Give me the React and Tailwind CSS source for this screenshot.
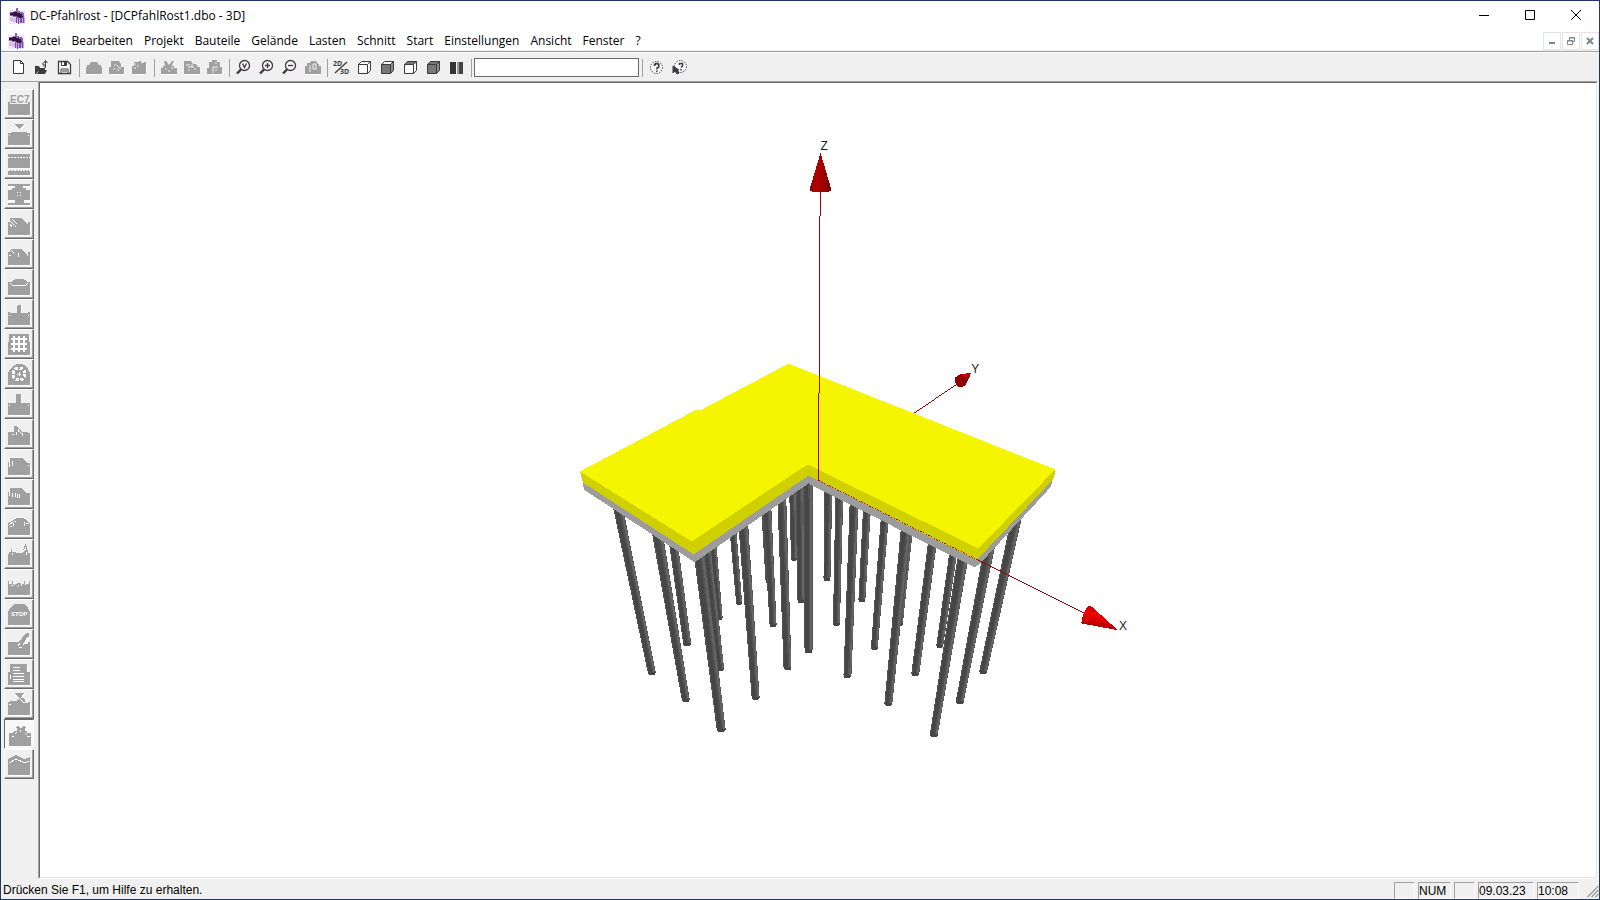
const menus = [
  "Datei",
  "Bearbeiten",
  "Projekt",
  "Bauteile",
  "Gelände",
  "Lasten",
  "Schnitt",
  "Start",
  "Einstellungen",
  "Ansicht",
  "Fenster",
  "?",
];

// [topX, topY, bottomX, bottomY, topWidth, bottomWidth], back to front
const piles = [
  [712, 540, 719.5, 619, 7, 5],
  [706, 545, 720, 670, 8, 7],
  [792, 485, 793.5, 560, 7, 6],
  [671, 530, 686.5, 645, 9, 8],
  [732, 525, 738.5, 604, 7, 6],
  [764, 500, 768, 582, 8, 6],
  [799, 480, 800.5, 602, 8, 7],
  [828, 482, 826.5, 580, 8, 7],
  [867, 500, 861.5, 601, 8, 7],
  [910, 520, 900, 625, 7, 5],
  [954, 545, 939.5, 647, 8, 7],
  [766, 500, 772.5, 626, 9, 7],
  [839, 487, 836, 625, 8, 7],
  [885, 510, 874, 649, 8, 7],
  [933, 535, 915, 675, 9, 8],
  [1020, 500, 983, 673, 11, 8],
  [615, 496, 651, 674, 10, 8],
  [655, 523, 685, 701, 11, 8],
  [698, 550, 720.5, 731, 11, 9],
  [742, 515, 755, 699, 10, 8],
  [781, 490, 787, 669, 9, 8],
  [807.5, 478, 808, 652, 9, 8],
  [854, 495, 847, 677, 9, 8],
  [906, 522, 888, 705, 10, 8],
  [991, 537, 959.5, 703, 11, 8],
  [963, 555, 933.5, 736, 11, 8],
];

const LINE = "#3c3c3c";

const doc = <path d="M3.5 1.5h7l3 3v10h-10zM10.5 1.5v3h3" fill="#fff" stroke={LINE} />;

const cube = (front, top) => (
  <>
    <path d="M2.5 5.5h9v9h-9z" fill={front} stroke={LINE} />
    <path d="M2.5 5.5l3-3h9l-3 3z" fill={top} stroke={LINE} />
    <path d="M11.5 14.5v-9l3-3v9z" fill={front === "#fff" ? "#fff" : "#8a8a8a"} stroke={LINE} />
  </>
);

const lens = (mark) => (
  <>
    <circle cx="9.5" cy="6.5" r="5" fill="#fbf5fd" stroke={LINE} strokeWidth="1.3" />
    <path d="M6 10.5l-4 4" stroke={LINE} strokeWidth="2.4" />
    <path d={mark} stroke={LINE} strokeWidth="1.4" fill="none" />
  </>
);

const grey = (d, marks) => (
  <>
    <path d={d} transform="translate(1 1)" fill="#fff" />
    <path d={d} fill="#a0a0a0" />
    {marks && <path d={marks} stroke="#f0f0f0" fill="none" />}
  </>
);

const toolGroups = [
  [
    ["Neu", doc],
    [
      "Öffnen",
      <>
        <path d="M2 7h4l1 2h5v2H6l-3 4H2zM4 15l2-4h8l-2 4z" fill={LINE} />
        <path d="M9 5h2v3M12.5 9V2M10.5 4l2-2.5 2 2.5" stroke={LINE} fill="none" />
      </>,
    ],
    [
      "Speichern",
      <>
        <path d="M2.5 2.5h9l3 3v9h-12z" fill="#fff" stroke={LINE} strokeWidth="1.3" />
        <path d="M5.5 2.5v4h5v-4M5 14v-4h7v4M6 12h5" fill="none" stroke={LINE} />
        <path d="M8 3h2v3H8z" fill={LINE} />
      </>,
    ],
  ],
  [
    ["Drucken", grey("M1 8h1V6h2l2-3h6l2 3h2v2h1v7H1z")],
    ["Seitenansicht", grey("M1 8h2V2h8l2 3v3h3v7H1z", "M6 7l2-2M9 6l2 3M5 10h2M9 10l2 2M12 8v2")],
    ["Bericht", grey("M1 7h2V3h5V2h2v1h5v12H1z", "M3 5h2M6 7h2M10 4l3-1M3 9h2")],
  ],
  [
    ["Ausschneiden", grey("M1 9h2V7h2L4 2h2l3 4 3-4h2l-2 5h2v2h3v6H1z", "M5 10h2M9 11v2M11 9h2")],
    ["Kopieren", grey("M1 2h7l2 3h3l2 3h2v7H1z", "M3 6h4M5 8h6M9 5v3M5 11h2M12 9v2")],
    ["Einfügen", grey("M1 9h2V3h3V1h5v2h3v5h2v7H1z", "M7 8h5M7 8v6M9 4h2M9 11h2")],
  ],
  [
    ["Zoom Vollbild", lens("M7.5 4.5l2 4 2-4")],
    ["Vergrößern", lens("M7 6.5h5M9.5 4v5")],
    ["Verkleinern", lens("M7 6.5h5")],
    ["Verschieben", grey("M1 7h2V4h3l1-2h5l2 3h1v2h2v8H1z", "M6 6v5M9 5h3v5H9zM5 12h2")],
  ],
  [
    [
      "2D/3D",
      <>
        <path d="M2 14L14 3" stroke={LINE} strokeWidth="1.3" />
        <text x="0" y="7" fontSize="7" fontWeight="bold" fill={LINE}>2D</text>
        <text x="7" y="15" fontSize="7" fontWeight="bold" fill={LINE}>3D</text>
      </>,
    ],
    ["Drahtmodell", cube("#fff", "#fff")],
    ["Vorderansicht", cube("#777", "#fff")],
    ["Draufsicht", cube("#fff", "#777")],
    ["Schattiert", cube("#777", "#777")],
    [
      "Teilung",
      <>
        <path d="M2 3h6v12H2z" fill="#333" />
        <path d="M9 3h2v12H9z" fill="#999" />
        <path d="M11 3h4v12h-4z" fill="#444" />
      </>,
    ],
  ],
];

const helpTools = [
  [
    "Hilfe",
    <>
      <circle cx="8.5" cy="8.5" r="6" fill="#fcf6fd" stroke={LINE} strokeDasharray="1.4 1.2" />
      <path d="M6.5 7V5.5h1v-1h2.5v1h.8V8L9 9v1.5M8.9 11.5v1.5" fill="none" stroke={LINE} strokeWidth="1.5" />
    </>,
  ],
  [
    "Direkthilfe",
    <>
      <circle cx="9.5" cy="7.5" r="6" fill="#fcf6fd" stroke={LINE} strokeDasharray="1.4 1.2" />
      <path d="M8.500 6V4.500h3V7L10 8.500M10 10v1.500" fill="none" stroke={LINE} strokeWidth="1.5" />
      <path d="M2 7v7l2-2 2 3 2-1-2-3h2z" fill={LINE} stroke={LINE} />
    </>,
  ],
];

// shape = filled silhouette, cut = engraved strokes
const sideTools = [
  { name: "EC7", shape: "M1 10h2v2h18v-2h2v13H1z", word: ["EC7", 3, 11, 10] },
  { name: "Gelände", shape: "M7 2h10l-5 5zM1 11h1v-1h20v1h1v12H1z", cut: "M2 10.5h2M20 10.5h2M2 13.5h1M21 13.5h1" },
  { name: "Schichten", shape: "M1 2h22v4H1zM1 6h22v10H1zM1 18h22v5H1z", cut: "M1 5.5h22M1 18.5h22", dots: true },
  { name: "Bodenprofil", shape: "M1 2h22v2H1zM1 8h4V6h3V3h8v3h3v2h4v10h-6v5H8v-5H1zM1 21h22v2H1z", cut: "M10 10.5h1M13 10.5h1M10 13.5h1M13 13.5h1M1 5.5h6M17 5.5h6M1 19.5h7M17 19.5h6" },
  { name: "Böschung", shape: "M1 10h2V6h11l6 6h1v-2h2v13H1z", cut: "M2 8l7 7M5 7l5 5M3 12l2 3" },
  { name: "Böschung 2", shape: "M1 10h2V7h12l5 6h1v-3h2v13H1z", cut: "M3 7l5 5M11.5 11v4M2 13.5h2M20 13.5h1" },
  { name: "Platte", shape: "M1 10h3l2-2 3-1h6l3 1 2 2h3v13H1z", cut: "M3 11l2 2h14l2-2" },
  { name: "Pfahl", shape: "M1 10h2v1h7V4l1-1h2l1 1v7h7v-1h2v13H1z", cut: "M2 13.5h1M21 13.5h1" },
  { name: "Pfahlraster", shape: "M1 10h1V2h20v8h1v13H1z", cut: "M4 7h16M4 12h16M4 17h16M7 4v16M12 4v16M17 4v16", wide: true },
  { name: "Pfahlkreis", shape: "M1 11l2-4 4-4 3-1h4l3 1 4 4 2 4v12H1z", wheel: true },
  { name: "Einzelpfahl", shape: "M1 11h8V2h5v9h9v12H1z", cut: "M2 13.5h1M21 13.5h1" },
  { name: "Schrägpfahl", shape: "M1 10h6V4h2l6 6h6v1h2v12H1z", cut: "M9.5 10v3M11.5 7v3M15.5 11v3M5 12h2M12 9l4 4" },
  { name: "Last links", shape: "M1 10h2V6h12l5 5h3v12H1z", cut: "M2.5 10v5M5.5 9v5M21 13.5h1" },
  { name: "Linienlast", shape: "M1 10h2V6h11l6 5h3v12H1z", cut: "M2.5 10v4M5.5 11v4M8.5 11v4M10.5 12v4M12.5 12v4" },
  { name: "Flächenlast", shape: "M1 11l4-2 2-2 3-1h5l3 1 2 2 3 2v12H1z", cut: "M2 13l4-3M6.5 11v3M17.5 10v4M7 9.5h2M19 12l3-1M3 14.5h2" },
  { name: "Umgebung", shape: "M1 12h1v-2h2V7h1v3h4v1h7V7h1V4h1V2h1v2h1v4h1v3h2v12H1z", cut: "M16 10l2-3M19 10v3M5.5 11v2M18 5v3" },
  { name: "Baugrund", shape: "M1 9h1v3h3V9h1v3h4v-1h4v1h3V9h1v3h4V9h1v14H1z", cut: "M4 13h2M7.5 10v3M10 15l2-2M14.5 11v3M18.5 10v3" },
  { name: "Stop", shape: "M1 10l2-4 4-4h10l4 4 2 4v13H1z", word: ["STOP", 4, 14, 6], light: true },
  { name: "Bearbeiten", shape: "M1 10h11l7-9h3v3l-5 8h4v-2h2v13H1z", cut: "M11 14l2-3M21 5l-5 8M12 15h3" },
  { name: "Liste", shape: "M1 10h2V2h17v8h3v13H1z", cut: "M6 5.5h7M6 8.5h7M6 11.5h11M6 14.5h11M6 17.5h11M6 19.5h11M3.5 13v4" },
  { name: "Schnitt", shape: "M7 1h10l-3 5h2l4 4h3v13H1V10h2v-1h7l2-3z", cut: "M12 6l5 5M17 10h4M2 12.5h2M18 8l3 2" },
  { name: "3D-Ansicht", shape: "M2 11h3l2-2h3V7L9 5l2-1 3 2 3-2 2 1-1 2v2h2v2h4v13H2z", cut: "M8 12l2-2M13.5 8v2M5 14h2M18 11l2 2M20 14h3", active: true },
  { name: "Ergebnisse", shape: "M1 7l8-4 8 4 6-2v18H1z", cut: "M2 11l7-4 9 4 4-2" },
];

function Tool({ name, children }) {
  return (
    <button aria-label={name} className="flex h-6 w-[23px] shrink-0 items-center justify-center">
      <svg viewBox="0 0 17 17" className="h-[17px] w-[17px]" fill="none">
        {children}
      </svg>
    </button>
  );
}

function Divider() {
  return (
    <span className="flex w-1.5 shrink-0 justify-center">
      <i className="h-[18px] w-px bg-[#a0a0a0]" />
    </span>
  );
}

function SideTool({ tool }) {
  return (
    <button
      aria-label={tool.name}
      className={`flex h-[30px] w-[30px] items-center justify-center border ${
        tool.active
          ? "border-t-[#696969] border-r-white border-b-white border-l-[#696969] bg-[#f8f8f8]"
          : "border-t-white border-r-[#696969] border-b-[#696969] border-l-white bg-[#f0f0f0] shadow-[inset_-1px_-1px_0_#a0a0a0]"
      }`}
    >
      <svg viewBox="0 0 24 24" className="h-6 w-6" shapeRendering="crispEdges">
        <path d={tool.shape} transform="translate(1 1)" fill="#fff" />
        <path d={tool.shape} fill="#a0a0a0" />
        {tool.cut && (
          <path
            d={tool.cut}
            fill="none"
            stroke="#fff"
            strokeWidth={tool.wide ? 2 : 1}
            strokeDasharray={tool.dots ? "2 1" : undefined}
          />
        )}
        {tool.wheel && (
          <g fill="none" stroke="#fff">
            <circle cx="12" cy="12" r="6" strokeWidth="3" strokeDasharray="3 1.7" />
            <path d="M12 10v4M10 12h4" />
          </g>
        )}
        {tool.word && (
          <text
            x={tool.word[1]}
            y={tool.word[2]}
            fontSize={tool.word[3]}
            fontWeight="bold"
            fontFamily="Liberation Sans, Arial, sans-serif"
            fill={tool.light ? "#fff" : "#a0a0a0"}
          >
            {tool.word[0]}
          </text>
        )}
      </svg>
    </button>
  );
}

function Logo() {
  return (
    <svg viewBox="0 0 16 16" className="h-4 w-4 shrink-0" shapeRendering="crispEdges">
      <path d="M0 2h16v14H0z" fill="#f0e6fa" />
      <path d="M1 9h3v4H1zM4 10h3v4H4z" fill="#d2bce8" />
      <path d="M7 9h9v6H7z" fill="#c4a4dc" />
      <path d="M7 9h1v6H7zM9 10h1v6H9zM11 10h2v5h-2zM14 8h1v7h-1z" fill="#7c4c9c" />
      <path d="M1 4h4V3h2V0h2v3l4 1 2 2v4l-3 1-5-2-6-1z" fill="#8c64b0" />
      <path d="M1 5l5-1 7 2 1 3-3 1-4-2-6-1z" fill="#321440" />
    </svg>
  );
}

function Pile({ p }) {
  const [x1, y1, x2, y2, w1, w2] = p;
  const strip = (a, b) =>
    `${x1 + (a - 0.5) * w1},${y1} ${x1 + (b - 0.5) * w1},${y1} ${x2 + (b - 0.5) * w2},${y2 - 2} ${x2 + (a - 0.5) * w2},${y2 - 2}`;
  return (
    <g>
      <ellipse cx={x2} cy={y2 - 2} rx={w2 / 2} ry="3" fill="#464646" />
      <polygon points={strip(0, 1)} fill="#525252" />
      <polygon points={strip(0.12, 0.55)} fill="#464646" />
      <polygon points={strip(0.72, 0.95)} fill="#646464" />
    </g>
  );
}

function Scene() {
  return (
    <svg viewBox="39 82 1557 795" className="h-full w-full" shapeRendering="crispEdges" role="img" aria-label="3D">
      <defs>
        <linearGradient id="coneZ">
          <stop offset="0" stopColor="#8c0000" />
          <stop offset="0.35" stopColor="#b40000" />
          <stop offset="1" stopColor="#780000" />
        </linearGradient>
        <linearGradient id="coneX" x1="0.6" y1="0" x2="0.3" y2="1">
          <stop offset="0" stopColor="#a00000" />
          <stop offset="0.35" stopColor="#f00000" />
          <stop offset="0.6" stopColor="#d80000" />
          <stop offset="1" stopColor="#900000" />
        </linearGradient>
      </defs>

      {piles.map((p) => (
        <Pile key={p.join()} p={p} />
      ))}

      {/* slab: concrete edge, yellow edge, top face */}
      <polygon points="582,480 583,489 694,562 808,483 974,567 980,563 1051,486 1052,478 976,556 808,473 693,552" fill="#9c9c9c" />
      <polygon points="579,470 582,482 693,554 808,475 976,560 1051,481 1054,477 1055,469 978,546 807,463 691,540" fill="#d0d000" />
      <polygon points="579,471 696,409 699,410 788,363 1055,469 978,548 807,464 691,541" fill="#f5f500" />

      <g stroke="#a00000" fill="none">
        <path d="M820.5 190v25M819.5 215v177M818.5 392v88" />
        <path d="M818 480l158 79" strokeDasharray="1.5 1.5" />
        <path d="M976 559l109 54M914 412.5l44-30" />
      </g>
      <path d="M820 152l11 37-3 2h-16l-3-2z" fill="url(#coneZ)" />
      <path d="M1090 605l28 25-37-7 2-9 4-7z" fill="url(#coneX)" />
      <path d="M971 372l-6 13-3 1h-4l-3-4v-5l4-3z" fill="#900000" />
      <path d="M971 372l-10 2 4 4z" fill="#c80000" />

      <g fontSize="12" fontFamily="Liberation Sans, Arial, sans-serif" fill="#1a1a1a">
        <text x="820" y="149">Z</text>
        <text x="971" y="372">Y</text>
        <text x="1119" y="630">X</text>
      </g>
    </svg>
  );
}

function Panel({ className, children }) {
  return (
    <span className={`h-[17px] border border-t-[#a0a0a0] border-r-white border-b-white border-l-[#a0a0a0] leading-4 ${className}`}>
      {children}
    </span>
  );
}

const mdiButton = "flex h-[18px] w-[18px] items-center justify-center border border-[#e3e3e3] bg-white";
const windowButton = "flex h-7 w-[46px] items-center justify-center self-start";

export default function App() {
  return (
    <div className="flex h-screen flex-col overflow-hidden border border-[#1f3864] bg-[#f0f0f0] font-['Open_Sans',sans-serif] text-xs text-black">
      <header className="flex h-[30px] shrink-0 items-center bg-white pl-2">
        <Logo />
        <h1 className="ml-[5px] flex-1 whitespace-nowrap">DC-Pfahlrost - [DCPfahlRost1.dbo - 3D]</h1>
        <button aria-label="Minimieren" className={windowButton}>
          <svg viewBox="0 0 10 10" className="h-2.5 w-2.5"><path d="M0 5.5h10" stroke="#000" /></svg>
        </button>
        <button aria-label="Maximieren" className={windowButton}>
          <svg viewBox="0 0 10 10" className="h-2.5 w-2.5"><path d="M.5.5h9v9h-9z" fill="none" stroke="#000" /></svg>
        </button>
        <button aria-label="Schließen" className={windowButton}>
          <svg viewBox="0 0 10 10" className="h-2.5 w-2.5"><path d="M0 0l10 10M10 0L0 10" stroke="#000" /></svg>
        </button>
      </header>

      <nav className="flex h-[19px] shrink-0 items-center bg-white pl-[7px]">
        <Logo />
        <ul className="ml-[7px] flex flex-1 gap-[11px]">
          {menus.map((m) => (
            <li key={m}>
              <button className="block leading-5">{m}</button>
            </li>
          ))}
        </ul>
        <div className="flex gap-px">
          <button aria-label="Fenster minimieren" className={mdiButton}>
            <svg viewBox="0 0 8 8" className="h-2 w-2"><path d="M1 6h6" stroke="#7a8797" strokeWidth="2" /></svg>
          </button>
          <button aria-label="Fenster wiederherstellen" className={mdiButton}>
            <svg viewBox="0 0 8 8" className="h-2 w-2" fill="none" stroke="#7a8797">
              <path d="M.5 3.5h5v4h-5zM0 4h6M2.5 3V.5h5v4H6M2 1h6" />
            </svg>
          </button>
          <button aria-label="Fenster schließen" className={mdiButton}>
            <svg viewBox="0 0 8 8" className="h-2 w-2"><path d="M1 1l6 6M7 1L1 7" stroke="#7a8797" strokeWidth="2" /></svg>
          </button>
        </div>
      </nav>

      <div className="mt-px flex h-[30px] shrink-0 items-center border-t border-[#a0a0a0] pt-0.5 pl-1.5 shadow-[inset_0_1px_0_#fff]">
        {toolGroups.map((group, i) => (
          <div key={i} className="flex items-center">
            {group.map(([name, icon]) => (
              <Tool key={name} name={name}>{icon}</Tool>
            ))}
            <Divider />
          </div>
        ))}
        <input aria-label="Eingabe" className="h-[19px] w-[165px] border border-[#696969] bg-white px-1 outline-none" />
        <Divider />
        {helpTools.map(([name, icon]) => (
          <Tool key={name} name={name}>{icon}</Tool>
        ))}
      </div>

      <div className="flex min-h-0 flex-1">
        <aside className="flex w-[37px] shrink-0 flex-col border-t border-[#a0a0a0] pt-[7px] pl-[3px]">
          {sideTools.map((tool) => (
            <SideTool key={tool.name} tool={tool} />
          ))}
        </aside>
        <main className="mr-px min-w-0 flex-1 border border-t-[#a0a0a0] border-r-white border-b-white border-l-[#a0a0a0]">
          <div className="h-full border border-t-[#696969] border-r-[#e3e3e3] border-b-[#e3e3e3] border-l-[#696969] bg-white">
            <Scene />
          </div>
        </main>
      </div>

      <footer className="flex h-5 shrink-0 items-center gap-[3px] pt-0.5 pl-0.5 font-['Liberation_Sans',Arial,sans-serif]">
        <span className="flex-1">Drücken Sie F1, um Hilfe zu erhalten.</span>
        <Panel className="w-[21px]" />
        <Panel className="w-[33px]">NUM</Panel>
        <Panel className="w-[21px]" />
        <Panel className="w-14">09.03.23</Panel>
        <Panel className="w-[42px]">10:08</Panel>
        <svg viewBox="0 0 16 16" className="h-4 w-[17px]" stroke="#a0a0a0" strokeWidth="1.5">
          <path d="M5 15L16 4M9 15l7-7M13 15l3-3" />
        </svg>
      </footer>
    </div>
  );
}
